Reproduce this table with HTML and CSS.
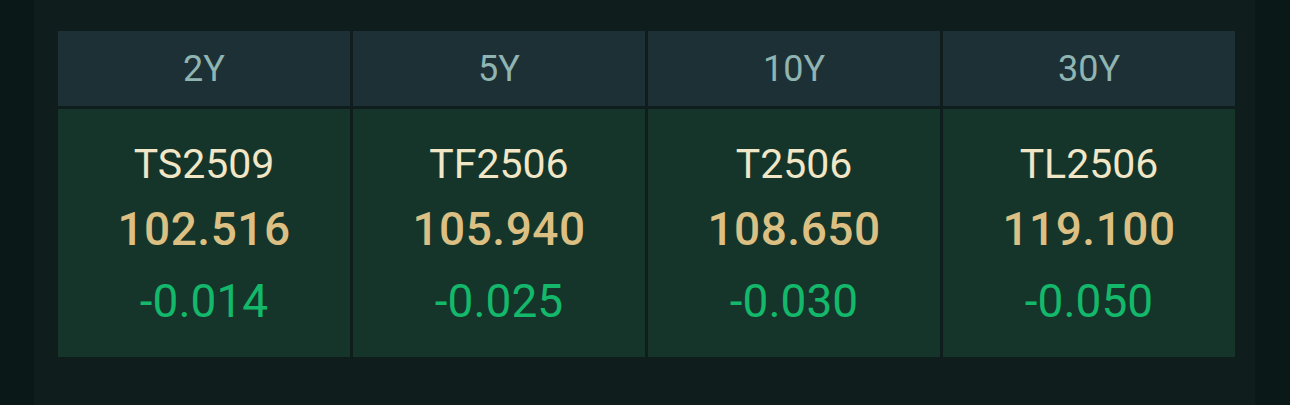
FILE: index.html
```html
<!DOCTYPE html>
<html>
<head>
    <meta content="text/html; charset=utf-8" http-equiv="Content-Type">
    <meta content="width=device-width, initial-scale=1" name="viewport">
    <link rel="stylesheet" href="styles.css">
    <title>Treasury futures</title>
</head>
<body>
    <div class="panel">
        <div class="board">
            <div class="term">2Y</div>
            <div class="term">5Y</div>
            <div class="term">10Y</div>
            <div class="term">30Y</div>

            <div class="quote">
                <div class="code">TS2509</div>
                <div class="price">102.516</div>
                <div class="change">-0.014</div>
            </div>
            <div class="quote">
                <div class="code">TF2506</div>
                <div class="price">105.940</div>
                <div class="change">-0.025</div>
            </div>
            <div class="quote">
                <div class="code">T2506</div>
                <div class="price">108.650</div>
                <div class="change">-0.030</div>
            </div>
            <div class="quote">
                <div class="code">TL2506</div>
                <div class="price">119.100</div>
                <div class="change">-0.050</div>
            </div>
        </div>
    </div>
</body>
</html>
```

FILE: styles.css
```css
body, html {
    margin: 0;
    padding: 0;
    height: 100%;
    background: #0a1818;
    font-family: Roboto, "Liberation Sans", sans-serif;
}

.panel {
    margin: 0 35px 0 34px;
    height: 405px;
    box-sizing: border-box;
    padding: 31px 20px 0 24px;
    background: #101d1d;
}

.board {
    display: grid;
    grid-template-columns: repeat(4, 292px);
    grid-template-rows: 75px 248px;
    gap: 3px;
}

.term {
    background: #1d3035;
    color: #8fb4b2;
    font-size: 36px;
    display: flex;
    align-items: center;
    justify-content: center;
}

.quote {
    background: #15352a;
    display: flex;
    flex-direction: column;
    align-items: center;
    padding-top: 32px;
    box-sizing: border-box;
}

.code {
    color: #f1e6c6;
    font-size: 41px;
    line-height: 46px;
}

.price {
    color: #dcc083;
    font-size: 46px;
    font-weight: 500;
    letter-spacing: 0.5px;
    line-height: 50px;
    margin-top: 17px;
}

.change {
    color: #14b86b;
    font-size: 46px;
    line-height: 52px;
    margin-top: 21px;
}
```
